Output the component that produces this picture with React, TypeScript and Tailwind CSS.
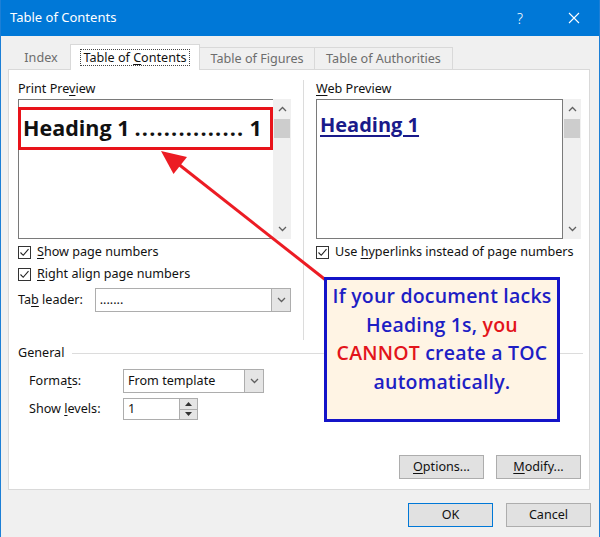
import React from "react";

function Chevron({ dir = "down", className = "" }: { dir?: "up" | "down"; className?: string }) {
  return (
    <svg width="9" height="6" viewBox="0 0 9 6" className={className}>
      {dir === "down" ? (
        <path d="M1 1 L4.5 4.5 L8 1" fill="none" stroke="#606060" strokeWidth="1.3" />
      ) : (
        <path d="M1 5 L4.5 1.5 L8 5" fill="none" stroke="#606060" strokeWidth="1.3" />
      )}
    </svg>
  );
}

function Check() {
  return (
    <span className="w-[13px] h-[13px] border border-[#333] bg-white flex items-center justify-center shrink-0">
      <svg width="11" height="11" viewBox="0 0 11 11">
        <path d="M1.5 5.5 L4.2 8.3 L9.5 2.2" fill="none" stroke="#222" strokeWidth="1.1" />
      </svg>
    </span>
  );
}

function Scrollbar() {
  return (
    <div className="w-[18px] bg-[#f0f0f0] flex flex-col items-center shrink-0">
      <div className="h-[20px] flex items-center justify-center">
        <Chevron dir="up" />
      </div>
      <div className="w-[16px] h-[19px] bg-[#cdcdcd]" />
      <div className="flex-1" />
      <div className="h-[20px] flex items-center justify-center">
        <Chevron dir="down" />
      </div>
    </div>
  );
}

function Combo({ value, width }: { value: string; width: string }) {
  return (
    <div className={`${width} h-[24px] border border-[#adadad] bg-white flex`}>
      <div className="flex-1 pl-[4px] flex items-center text-[#111]">{value}</div>
      <div className="w-[19px] bg-[#e5e5e5] border-l border-[#adadad] flex items-center justify-center">
        <Chevron />
      </div>
    </div>
  );
}

function Button({ children, primary = false }: { children: React.ReactNode; primary?: boolean }) {
  return (
    <div
      className={`w-[85px] h-[24px] flex items-center justify-center bg-[#e1e1e1] border ${
        primary ? "border-[#0078d7]" : "border-[#adadad]"
      } text-[#111]`}
    >
      {children}
    </div>
  );
}

export default function App() {
  return (
    <div className="relative w-[600px] h-[537px] bg-[#f0f0f0] border-x border-[#1c7fd6] overflow-hidden font-['Noto_Sans',sans-serif] text-[12.6px] text-[#111]">
      {/* Title bar */}
      <div className="h-[36px] -mx-px bg-[#0078d7] text-white flex items-center">
        <span className="pl-[10px] text-[13px]">Table of Contents</span>
        <div className="ml-auto flex items-center mr-[3px]">
          <span className="w-[46px] text-center text-[14px] font-light">?</span>
          <span className="w-[46px] ml-[8px] flex justify-center">
            <svg width="12" height="12" viewBox="0 0 12 12">
              <path d="M1 1 L11 11 M11 1 L1 11" stroke="white" strokeWidth="1.1" />
            </svg>
          </span>
        </div>
      </div>

      {/* Tabs */}
      <div className="h-[33px] pl-[11px] flex items-end text-[#6d6d6d]">
        <div className="h-[23px] w-[58px] flex items-center justify-center -mb-px">Index</div>
        <div className="relative z-10 h-[26px] w-[130px] bg-white border-x border-t border-[#d9d9d9] flex items-center justify-center text-[#111] -mb-px">
          <span className="border border-dotted border-[#444] px-[2px] leading-[15px]">
            Table of <u className="underline-offset-2">C</u>ontents
          </span>
        </div>
        <div className="h-[23px] w-[115px] border-t border-r border-[#d9d9d9] flex items-center justify-center -mb-px">
          Table of Figures
        </div>
        <div className="h-[23px] w-[138px] border-t border-r border-[#d9d9d9] flex items-center justify-center -mb-px">
          Table of Authorities
        </div>
      </div>

      {/* Panel */}
      <div className="ml-[7px] w-[582px] h-[421px] bg-white border border-[#d9d9d9] flex flex-col pl-[9px] pt-[11px]">
        <div className="h-[259px] flex">
          {/* Left column */}
          <div className="w-[273px] flex flex-col">
            <div className="h-[16px] leading-[16px]">
              Print Pre<u className="underline-offset-2">v</u>iew
            </div>
            <div className="mt-[2px] h-[140px] flex">
              <div className="relative flex-1 border border-[#7a7a7a] border-r-0 bg-white">
                <div className="absolute left-[-1px] right-0 top-[7px] h-[43px] border-[3px] border-[#e8131a] flex items-center pl-[2px] font-['Open_Sans',sans-serif] font-bold text-[21.5px] text-[#111] whitespace-nowrap">
                  Heading 1 <span className="tracking-[1.2px] ml-[5px]">...............</span>
                  <span className="ml-[5px]">1</span>
                </div>
              </div>
              <Scrollbar />
            </div>
            <div className="mt-[5px] h-[16px] flex items-center gap-[6px]">
              <Check />
              <span>
                <u className="underline-offset-2">S</u>how page numbers
              </span>
            </div>
            <div className="mt-[6px] h-[16px] flex items-center gap-[6px]">
              <Check />
              <span>
                <u className="underline-offset-2">R</u>ight align page numbers
              </span>
            </div>
            <div className="mt-[6px] flex items-center">
              <span className="w-[77px]">
                Ta<u className="underline-offset-2">b</u> leader:
              </span>
              <Combo value="......." width="w-[197px]" />
            </div>
          </div>

          {/* Separator */}
          <div className="ml-[12px] mt-[-1px] w-px bg-[#dcdcdc]" />

          {/* Right column */}
          <div className="ml-[12px] w-[265px] flex flex-col">
            <div className="h-[16px] leading-[16px]">
              <u className="underline-offset-2">W</u>eb Preview
            </div>
            <div className="mt-[2px] h-[140px] flex">
              <div className="flex-1 border border-[#7a7a7a] bg-white pl-[3px] pt-[10px]">
                <span className="font-['Open_Sans',sans-serif] font-bold text-[20px] text-[#1a1a8a] underline underline-offset-[3px] decoration-[1.5px]">
                  Heading 1
                </span>
              </div>
              <Scrollbar />
            </div>
            <div className="mt-[5px] h-[16px] flex items-center gap-[6px]">
              <Check />
              <span>
                Use <u className="underline-offset-2">h</u>yperlinks instead of page numbers
              </span>
            </div>
          </div>
        </div>

        {/* General */}
        <div className="mt-[5px] h-[16px] flex items-center pr-[6px]">
          <span>General</span>
          <div className="ml-[8px] flex-1 h-px bg-[#dcdcdc]" />
        </div>
        <div className="mt-[8px] pl-[11px] flex items-center">
          <span className="w-[94px]">
            Forma<u className="underline-offset-2">t</u>s:
          </span>
          <Combo value="From template" width="w-[141px]" />
        </div>
        <div className="mt-[5px] pl-[11px] flex items-center">
          <span className="w-[94px]">
            Show <u className="underline-offset-2">l</u>evels:
          </span>
          <div className="w-[75px] h-[22px] border border-[#adadad] flex bg-white">
            <div className="flex-1 pl-[4px] flex items-center">1</div>
            <div className="w-[18px] border-l border-[#adadad] flex flex-col">
              <div className="flex-1 bg-[#e5e5e5] border-b border-[#adadad] flex items-center justify-center">
                <svg width="7" height="4" viewBox="0 0 7 4">
                  <path d="M0 4 L3.5 0 L7 4 Z" fill="#333" />
                </svg>
              </div>
              <div className="flex-1 bg-[#e5e5e5] flex items-center justify-center">
                <svg width="7" height="4" viewBox="0 0 7 4">
                  <path d="M0 0 L3.5 4 L7 0 Z" fill="#333" />
                </svg>
              </div>
            </div>
          </div>
        </div>

        <div className="mt-auto mb-[10px] pr-[8px] flex justify-end gap-[12px]">
          <Button>
            <u className="underline-offset-2">O</u>ptions...
          </Button>
          <Button>
            <u className="underline-offset-2">M</u>odify...
          </Button>
        </div>
      </div>

      {/* Dialog buttons */}
      <div className="mt-[13px] mr-[8px] flex justify-end gap-[13px]">
        <Button primary>OK</Button>
        <Button>Cancel</Button>
      </div>

      {/* Annotation arrow */}
      <svg className="absolute left-0 top-0 pointer-events-none" width="600" height="537" viewBox="0 0 600 537">
        <line x1="326" y1="281" x2="176" y2="163" stroke="#ec1c24" strokeWidth="3" />
        <polygon points="160,151 172.5,174 186,157" fill="#ec1c24" />
      </svg>

      {/* Callout */}
      <div className="absolute left-[323px] top-[277px] w-[236px] h-[145px] border-[3px] border-[#1414c8] bg-[#fff4e4] pt-[2px] text-center font-['Open_Sans',sans-serif] font-semibold text-[19.5px] tracking-[0.2px] leading-[28.7px] text-[#1e1ec4] whitespace-nowrap">
        <div>If your document lacks</div>
        <div>
          Heading 1s, <span className="text-[#e3141b]">you</span>
        </div>
        <div>
          <span className="text-[#e3141b]">CANNOT</span> create a TOC
        </div>
        <div>automatically.</div>
      </div>
    </div>
  );
}
